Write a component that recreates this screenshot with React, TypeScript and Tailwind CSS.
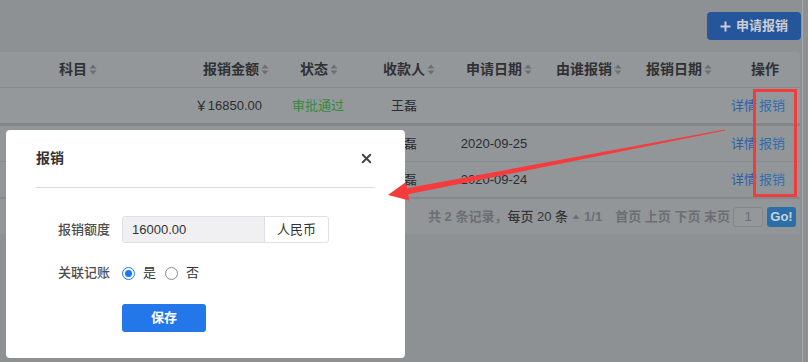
import { X } from 'lucide-react';

const font = "font-['Liberation_Sans','Noto_Sans_CJK_SC',sans-serif]";

function SortIcon() {
  return (
    <svg width="8" height="11" viewBox="0 0 8 11" className="ml-[2px] shrink-0">
      <path d="M4 0.5 L7.5 4.5 H0.5 Z" fill="#6c6f72" />
      <path d="M4 10.5 L7.5 6.5 H0.5 Z" fill="#6c6f72" />
    </svg>
  );
}

function Th({ label, sort = true, className = '' }: { label: string; sort?: boolean; className?: string }) {
  return (
    <div className={`flex items-center text-[14px] font-bold text-[#2f3134] ${className}`}>
      <span>{label}</span>
      {sort && <SortIcon />}
    </div>
  );
}

const cols = 'grid grid-cols-[156px_120px_84px_88px_92px_94px_86px_80px]';

function Row({ amount, status, payee, date }: { amount?: string; status?: string; payee: string; date?: string }) {
  return (
    <div className={`${cols} h-full items-center text-[13px] text-[#2b2d30]`}>
      <div />
      <div className="pr-[14px] text-right">{amount}</div>
      <div className="text-center text-[#358a3b]">{status}</div>
      <div className="text-center">{payee}</div>
      <div className="text-center">{date}</div>
      <div />
      <div />
      <div className="flex justify-end pr-[15px] text-[#2b5fa8]">
        <span>详情</span>
        <span className="ml-[2px] text-[#2f6fad]">报销</span>
      </div>
    </div>
  );
}

function Radio({ checked }: { checked?: boolean }) {
  return checked ? (
    <span className="flex h-[13px] w-[13px] items-center justify-center rounded-full border border-[#1677ff]">
      <span className="h-[7px] w-[7px] rounded-full bg-[#1677ff]" />
    </span>
  ) : (
    <span className="block h-[13px] w-[13px] rounded-full border border-[#8a8a8a]" />
  );
}

export default function App() {
  return (
    <div className={`relative h-[362px] w-[808px] overflow-hidden bg-[#8e9194] ${font}`}>
      <div className="flex h-full">
        <div className="w-[802px]">
          {/* top bar */}
          <div className="flex h-[52px] justify-end pr-[1px] pt-[12px]">
            <div className="flex h-[28px] w-[94px] items-center justify-center rounded-[4px] bg-[#25559a] text-[13px] font-bold text-[#c9ced6]">
              <svg width="11" height="11" viewBox="0 0 11 11" className="mr-[5px]">
                <path d="M5.5 0.5 V10.5 M0.5 5.5 H10.5" stroke="#c9ced6" strokeWidth="2" />
              </svg>
              申请报销
            </div>
          </div>

          {/* table */}
          <div className="w-[800px] overflow-hidden rounded-tr-[4px] bg-[#939699]">
            <div className={`${cols} h-[36px] items-center border-b border-[#86898c] bg-[#94979a]`}>
              <Th label="科目" className="justify-center" />
              <Th label="报销金额" className="justify-end pr-[7px]" />
              <Th label="状态" className="justify-center pl-[2px]" />
              <Th label="收款人" className="justify-center pl-[10px]" />
              <Th label="申请日期" className="justify-center pl-[10px]" />
              <Th label="由谁报销" className="justify-center pl-[4px]" />
              <Th label="报销日期" className="justify-center pl-[4px]" />
              <Th label="操作" sort={false} className="justify-center pl-[10px]" />
            </div>
            <div className="h-[35px] bg-[#95989b]">
              <Row amount="￥16850.00" status="审批通过" payee="王磊" />
            </div>
            <div className="h-[3px] bg-[#84878a]" />
            <div className="h-[36px] border-b border-[#8a8d90]">
              <Row payee="王磊" date="2020-09-25" />
            </div>
            <div className="h-[35px]">
              <Row payee="王磊" date="2020-09-24" />
            </div>
            <div className="h-[2px] bg-[#86898c]" />
            <div className="flex h-[35px] items-center justify-end pr-[4px] text-[13px] font-bold text-[#6b6e72]">
              <span>共 2 条记录，</span>
              <span className="font-medium text-[#34373a]">每页 20 条</span>
              <svg width="8" height="6" viewBox="0 0 8 6" className="mx-[4px]">
                <path d="M4 0.5 L7.5 5 H0.5 Z" fill="#6b6e72" />
              </svg>
              <span>1/1</span>
              <span className="ml-[13px]">首页 上页 下页 末页</span>
              <div className="ml-[3px] flex h-[20px] w-[30px] items-center justify-center rounded-[3px] border border-[#85888b] bg-[#95989b] font-normal text-[#6b6e72]">
                1
              </div>
              <div className="ml-[4px] flex h-[20px] w-[29px] items-center justify-center rounded-[3px] bg-[#2c6fa8] text-[#c8d3dd]">
                Go!
              </div>
            </div>
          </div>
        </div>
        <div className="flex-1 border-l border-[#a6a8aa] bg-[#8e9194]" />
      </div>

      {/* modal */}
      <div className="absolute left-[6px] top-[130px] h-[228px] w-[399px] rounded-[4px] bg-white px-[30px]">
        <div className="flex h-[58px] items-center justify-between border-b border-[#d9d9e6]">
          <span className="text-[14px] font-bold text-[#333]">报销</span>
          <X size={15} strokeWidth={3} className="mr-[1px] text-[#444]" />
        </div>
        <div className="mt-[28px] flex items-center">
          <span className="w-[74px] text-right text-[13px] font-medium text-[#4d4d4d]">报销额度</span>
          <div className="ml-[12px] flex h-[27px] w-[207px] overflow-hidden rounded-[3px] border border-[#dcdfe6] text-[13px] text-[#333]">
            <div className="flex flex-1 items-center bg-[#f0f0f2] pl-[9px]">16000.00</div>
            <div className="flex w-[64px] items-center justify-center border-l border-[#dcdfe6]">人民币</div>
          </div>
        </div>
        <div className="mt-[20px] flex h-[20px] items-center">
          <span className="w-[74px] text-right text-[13px] font-medium text-[#4d4d4d]">关联记账</span>
          <div className="ml-[12px] flex items-center text-[13px] text-[#333]">
            <Radio checked />
            <span className="ml-[8px]">是</span>
            <span className="ml-[9px]"><Radio /></span>
            <span className="ml-[8px]">否</span>
          </div>
        </div>
        <div className="mt-[21px] pl-[86px]">
          <div className="flex h-[28px] w-[84px] items-center justify-center rounded-[3px] bg-[#2477e9] text-[13px] font-bold text-white">
            保存
          </div>
        </div>
      </div>

      {/* annotations */}
      <svg className="pointer-events-none absolute left-0 top-0" width="808" height="362">
        <polygon
          points="388,195 409.3,200.5 408.2,194.3 725.1,130.5 724.9,129.5 407,188.3 405.9,182"
          fill="#f53b3b"
        />
      </svg>
      <div className="pointer-events-none absolute left-[753px] top-[89px] h-[108px] w-[44px] border-[3px] border-[#f03c3c]" />
    </div>
  );
}
